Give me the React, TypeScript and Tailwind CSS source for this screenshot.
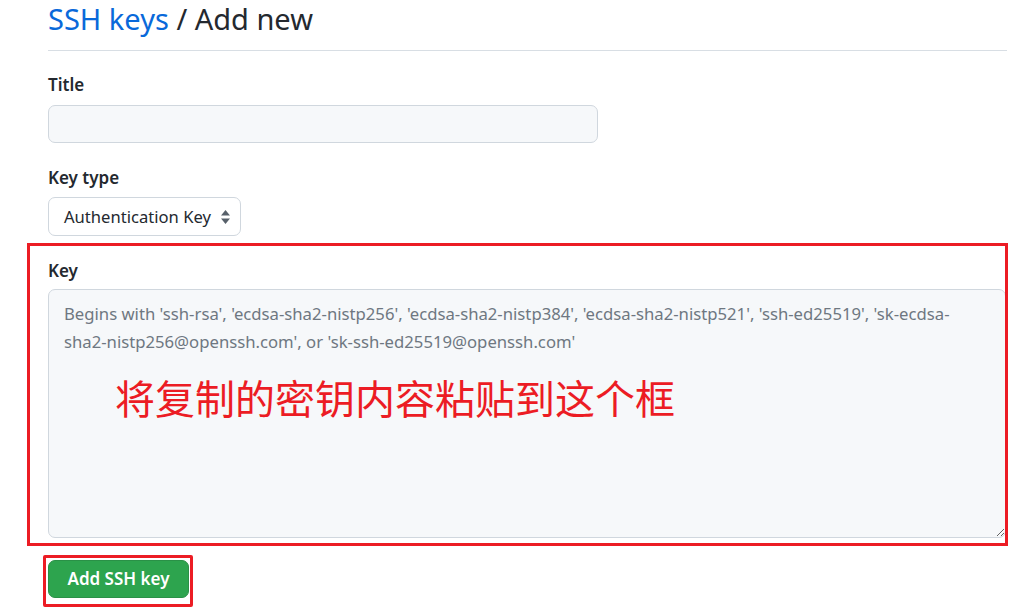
const font = { fontFamily: '"Noto Sans", "Open Sans", sans-serif' };

const SelectArrows = () => (
  <svg width="11" height="18" viewBox="0 0 11 18" className="text-[#57606a]">
    <path d="M5.5 2 L10 7.5 H1 Z" fill="currentColor" />
    <path d="M5.5 16 L10 10.5 H1 Z" fill="currentColor" />
  </svg>
);

export default function App() {
  return (
    <div
      className="relative h-[615px] w-[1026px] overflow-hidden bg-white text-[#24292f]"
      style={font}
    >
      <div className="pl-[48px] pr-[19px]">
        <h2 className="border-b border-[#d8dee4] pb-[12px] text-[29px] leading-[38px] font-normal">
          <a href="#" className="text-[#0969da]">
            SSH keys
          </a>{" "}
          / Add new
        </h2>

        <form className="flex flex-col">
          <label className="mt-[21px] text-[17px] leading-[25px] font-semibold">Title</label>
          <input
            type="text"
            className="mt-[8px] h-[38px] w-[550px] rounded-[7px] border border-[#d0d7de] bg-[#f6f8fa] px-[15px] text-[17px] outline-none"
          />

          <label className="mt-[22px] text-[17px] leading-[25px] font-semibold">Key type</label>
          <div className="mt-[7px] flex h-[39px] w-[193px] items-center justify-between rounded-[7px] border border-[#d0d7de] bg-white pl-[15px] pr-[9px]">
            <span className="text-[16.6px] leading-[25px]">Authentication Key</span>
            <SelectArrows />
          </div>

          <label className="mt-[22px] text-[17px] leading-[25px] font-semibold">Key</label>
          <textarea
            className="mt-[6px] h-[249px] w-[958px] rounded-[7px] border border-[#d0d7de] bg-[#f6f8fa] px-[15px] pt-[10px] text-[16.7px] leading-[28px] outline-none placeholder:text-[#6e7781]"
            placeholder="Begins with 'ssh-rsa', 'ecdsa-sha2-nistp256', 'ecdsa-sha2-nistp384', 'ecdsa-sha2-nistp521', 'ssh-ed25519', 'sk-ecdsa-sha2-nistp256@openssh.com', or 'sk-ssh-ed25519@openssh.com'"
          />

          <div className="mt-[22px]">
            <button
              type="button"
              className="h-[38px] w-[141px] rounded-[7px] border border-[#2a9147] bg-[#2da44e] text-[17px] font-semibold text-white"
            >
              Add SSH key
            </button>
          </div>
        </form>
      </div>

      {/* annotations */}
      <div className="pointer-events-none absolute left-[27px] top-[243px] h-[303px] w-[981px] border-[3px] border-[#ec1c24]" />
      <div
        className="pointer-events-none absolute left-[115px] top-[377px] text-[40px] leading-[40px] text-[#ec1c24]"
        style={{ fontFamily: '"Noto Sans CJK SC", sans-serif' }}
      >
        将复制的密钥内容粘贴到这个框
      </div>
      <div className="pointer-events-none absolute left-[43px] top-[555px] h-[52px] w-[150px] rounded-[2px] border-[3px] border-[#ec1c24]" />
    </div>
  );
}
